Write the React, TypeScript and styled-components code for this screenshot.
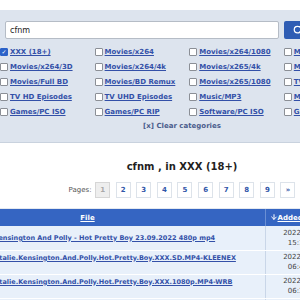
import React from "react";
import styled, { createGlobalStyle } from "styled-components";
import { Search, ArrowDown } from "lucide-react";

const categories = [
  "XXX (18+)", "Movies/x264", "Movies/x264/1080", "Movies/x264/720",
  "Movies/x264/3D", "Movies/x264/4k", "Movies/x265/4k", "Movies/x265/4k/HDR",
  "Movies/Full BD", "Movies/BD Remux", "Movies/x265/1080", "TV Episodes",
  "TV HD Episodes", "TV UHD Episodes", "Music/MP3", "Music/FLAC",
  "Games/PC ISO", "Games/PC RIP", "Software/PC ISO", "Games/PS4",
];

const rows = [
  { name: "Kensington And Polly - Hot Pretty Boy 23.09.2022 480p mp4", date: "2022-09-23", time: "15:19:42", top: false },
  { name: "Natalie.Kensington.And.Polly.Hot.Pretty.Boy.XXX.SD.MP4-KLEENEX", date: "2022-09-23", time: "06:41:10", top: true },
  { name: "Natalie.Kensington.And.Polly.Hot.Pretty.Boy.XXX.1080p.MP4-WRB", date: "2022-09-23", time: "06:37:55", top: true },
  { name: "Natalie.Kensington.And.Polly.Hot.Pretty.Boy.XXX.720p.MP4-WRB", date: "2022-09-23", time: "06:30:01", top: true },
];

const pages = ["1", "2", "3", "4", "5", "6", "7", "8", "9", "»"];

const App: React.FC = () => {
  return (
    <>
      <GlobalStyle />
      <Page>
        <Panel>
          <SearchRow>
            <SearchInput defaultValue="cfnm" />
            <SearchButton>
              <Search size={10} color="white" strokeWidth={3} />
            </SearchButton>
          </SearchRow>
          <CategoryGrid>
            {categories.map((c, i) => (
              <Category key={c}>
                <Box checked={i === 0}>{i === 0 && "✓"}</Box>
                <CatLink>{c}</CatLink>
              </Category>
            ))}
          </CategoryGrid>
          <ClearLine>[x] Clear categories</ClearLine>
        </Panel>

        <Title>cfnm , in XXX (18+)</Title>

        <Pager>
          <PagerLabel>Pages:</PagerLabel>
          {pages.map((p, i) => (
            <PageBox key={p} current={i === 0}>{p}</PageBox>
          ))}
        </Pager>

        <TableWrap>
          <Table>
            <thead>
              <tr>
                <HeadCell width={354}>File</HeadCell>
                <HeadCell width={72} left>
                  <ArrowDown size={8} color="white" strokeWidth={3} />
                  Added
                </HeadCell>
                <HeadCell width={110}>Size</HeadCell>
              </tr>
            </thead>
            <tbody>
              {rows.map((r) => (
                <Row key={r.name + r.time}>
                  <FileCell top={r.top}>
                    <FileLink top={r.top}>{r.name}</FileLink>
                  </FileCell>
                  <DateCell>
                    {r.date}
                    <br />
                    {r.time}
                  </DateCell>
                  <DateCell>1.2 GB</DateCell>
                </Row>
              ))}
            </tbody>
          </Table>
        </TableWrap>
      </Page>
    </>
  );
};

export default App;

const GlobalStyle = createGlobalStyle`
  html, body {
    margin: 0;
    padding: 0;
    overflow: hidden;
    background: #ffffff;
    font-family: "DejaVu Sans", Verdana, sans-serif;
  }
`;

const Page = styled.div`
  width: 364px;
  padding-top: 10px;
`;

const Panel = styled.div`
  background: #dde4ee;
  padding: 11px 0 8px 0;
  border-bottom: 1px solid #c9d2de;
`;

const SearchRow = styled.div`
  display: flex;
  gap: 5px;
  padding-left: 5px;
  height: 18px;
`;

const SearchInput = styled.input`
  width: 274px;
  height: 18px;
  box-sizing: border-box;
  border: 1px solid #b5bcc6;
  border-radius: 2px;
  padding: 0 0 0 4px;
  font-family: "DejaVu Sans", Verdana, sans-serif;
  font-size: 8px;
  color: #222;
  outline: none;
`;

const SearchButton = styled.button`
  width: 27px;
  height: 18px;
  border: none;
  border-radius: 2px;
  background: #2f5db4;
  display: flex;
  align-items: center;
  justify-content: center;
  padding: 0;
`;

const CategoryGrid = styled.div`
  display: grid;
  grid-template-columns: repeat(4, 94.6px);
  grid-auto-rows: 15px;
  margin-top: 5px;
`;

const Category = styled.div`
  display: flex;
  align-items: center;
  gap: 2px;
  white-space: nowrap;
`;

const Box = styled.span<{ checked: boolean }>`
  width: 6px;
  height: 6px;
  flex-shrink: 0;
  border: 1px solid ${(p) => (p.checked ? "#2c62c8" : "#8b8f96")};
  border-radius: 1px;
  background: ${(p) => (p.checked ? "#2c62c8" : "#ffffff")};
  color: white;
  font-size: 6px;
  line-height: 6px;
  text-align: center;
  font-weight: bold;
`;

const CatLink = styled.a`
  font-size: 7px;
  font-weight: bold;
  color: #3350a8;
  text-decoration: underline;
`;

const ClearLine = styled.div`
  height: 15px;
  line-height: 15px;
  text-align: center;
  font-size: 7px;
  font-weight: bold;
  color: #4a5d8c;
`;

const Title = styled.h1`
  margin: 17px 0 0 0;
  text-align: center;
  font-size: 10px;
  line-height: 14px;
  font-weight: bold;
  color: #1f1f1f;
`;

const Pager = styled.div`
  display: flex;
  justify-content: center;
  align-items: center;
  gap: 5.6px;
  margin-top: 8px;
  height: 16px;
`;

const PagerLabel = styled.span`
  font-size: 7px;
  color: #555;
  margin-right: -2px;
`;

const PageBox = styled.span<{ current: boolean }>`
  width: 15px;
  height: 16px;
  box-sizing: border-box;
  border: 1px solid ${(p) => (p.current ? "#d6d6d6" : "#dde3ea")};
  background: ${(p) => (p.current ? "#eeeeee" : "#ffffff")};
  color: ${(p) => (p.current ? "#a8a8a8" : "#2f55a8")};
  font-size: 7px;
  font-weight: bold;
  display: flex;
  align-items: center;
  justify-content: center;
`;

const TableWrap = styled.div`
  display: flex;
  justify-content: center;
  margin-top: 10px;
  border-top: 1px solid #e4e9f0;
`;

const Table = styled.table`
  flex-shrink: 0;
  width: 536px;
  border-collapse: collapse;
  table-layout: fixed;
`;

const HeadCell = styled.th<{ width: number; left?: boolean }>`
  width: ${(p) => p.width}px;
  height: 17px;
  padding: ${(p) => (p.left ? "0 0 0 4px" : "0")};
  text-align: ${(p) => (p.left ? "left" : "center")};
  background: #3565c2;
  color: white;
  font-size: 7px;
  font-weight: bold;
  text-decoration: underline;
  border-right: 1px solid #6a8fd4;
  vertical-align: middle;
  white-space: nowrap;
  svg {
    vertical-align: -1px;
  }
`;

const Row = styled.tr`
  height: 24px;
`;

const FileCell = styled.td<{ top: boolean }>`
  padding: 0 0 0 ${(p) => (p.top ? "79px" : "83px")};
  background: #e8f0fa;
  border-bottom: 1px solid #ffffff;
  border-right: 1px solid #c9d6e8;
  white-space: nowrap;
  overflow: hidden;
  vertical-align: ${(p) => (p.top ? "top" : "middle")};
`;

const FileLink = styled.a<{ top: boolean }>`
  display: block;
  padding-top: ${(p) => (p.top ? "2px" : "0")};
  line-height: 10px;
  font-size: 6.5px;
  font-weight: bold;
  color: #3350a8;
  text-decoration: underline;
`;

const DateCell = styled.td`
  background: #e8f0fa;
  border-bottom: 1px solid #ffffff;
  border-right: 1px solid #c9d6e8;
  text-align: center;
  font-size: 7px;
  line-height: 10px;
  color: #444;
  padding: 0;
`;
